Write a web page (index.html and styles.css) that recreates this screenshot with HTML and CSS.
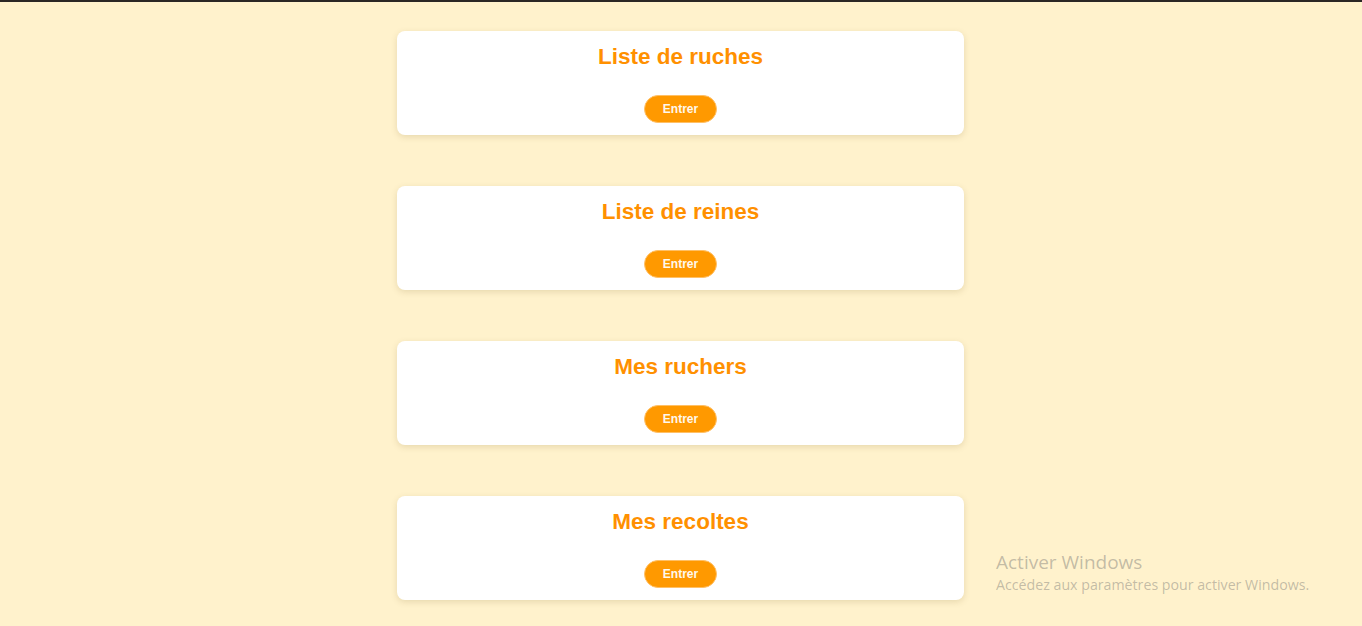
FILE: index.html
```html
<!DOCTYPE html>
<html lang="fr">
<head>
<meta charset="utf-8">
<title>Accueil</title>
<link rel="stylesheet" href="styles.css">
</head>
<body>
<main class="menu">
  <section class="card">
    <h2 class="card-title">Liste de ruches</h2>
    <button class="btn">Entrer</button>
  </section>
  <section class="card">
    <h2 class="card-title">Liste de reines</h2>
    <button class="btn">Entrer</button>
  </section>
  <section class="card">
    <h2 class="card-title">Mes ruchers</h2>
    <button class="btn">Entrer</button>
  </section>
  <section class="card">
    <h2 class="card-title">Mes recoltes</h2>
    <button class="btn">Entrer</button>
  </section>
</main>
<div class="watermark">
  <div class="wm-title">Activer Windows</div>
  <div class="wm-sub">Accédez aux paramètres pour activer Windows.</div>
</div>
</body>
</html>
```
FILE: styles.css
```css
html, body {
  margin: 0;
  padding: 0;
}
body {
  background: #fff2cc;
  border-top: 2px solid #2b2724;
  font-family: "Liberation Sans", Arial, sans-serif;
  min-height: 624px;
  box-sizing: border-box;
}
.menu {
  display: flex;
  flex-direction: column;
  align-items: center;
  gap: 51px;
  padding-top: 29px;
  padding-right: 1px;
}
.card {
  width: 567px;
  height: 104px;
  box-sizing: border-box;
  background: #ffffff;
  border-radius: 8px;
  box-shadow: 0 2px 6px rgba(120, 100, 40, 0.18);
  padding: 13px 0 0;
  display: flex;
  flex-direction: column;
  align-items: center;
}
.card-title {
  margin: 0 0 25px;
  font-size: 22.5px;
  font-weight: bold;
  color: #ff9000;
  line-height: 26px;
}
.btn {
  width: 73px;
  height: 28px;
  border: 1px solid #ffc066;
  border-radius: 14px;
  background: #ff9900;
  color: #fff8ec;
  font-family: "Liberation Sans", Arial, sans-serif;
  font-weight: bold;
  font-size: 12px;
  padding: 0;
  cursor: pointer;
}
.watermark {
  position: absolute;
  left: 996px;
  top: 550px;
  font-family: "Open Sans", "Noto Sans", sans-serif;
  color: rgba(110, 110, 110, 0.42);
}
.wm-title {
  font-size: 19px;
  line-height: 24px;
}
.wm-sub {
  font-size: 14.2px;
  line-height: 21px;
}
```
